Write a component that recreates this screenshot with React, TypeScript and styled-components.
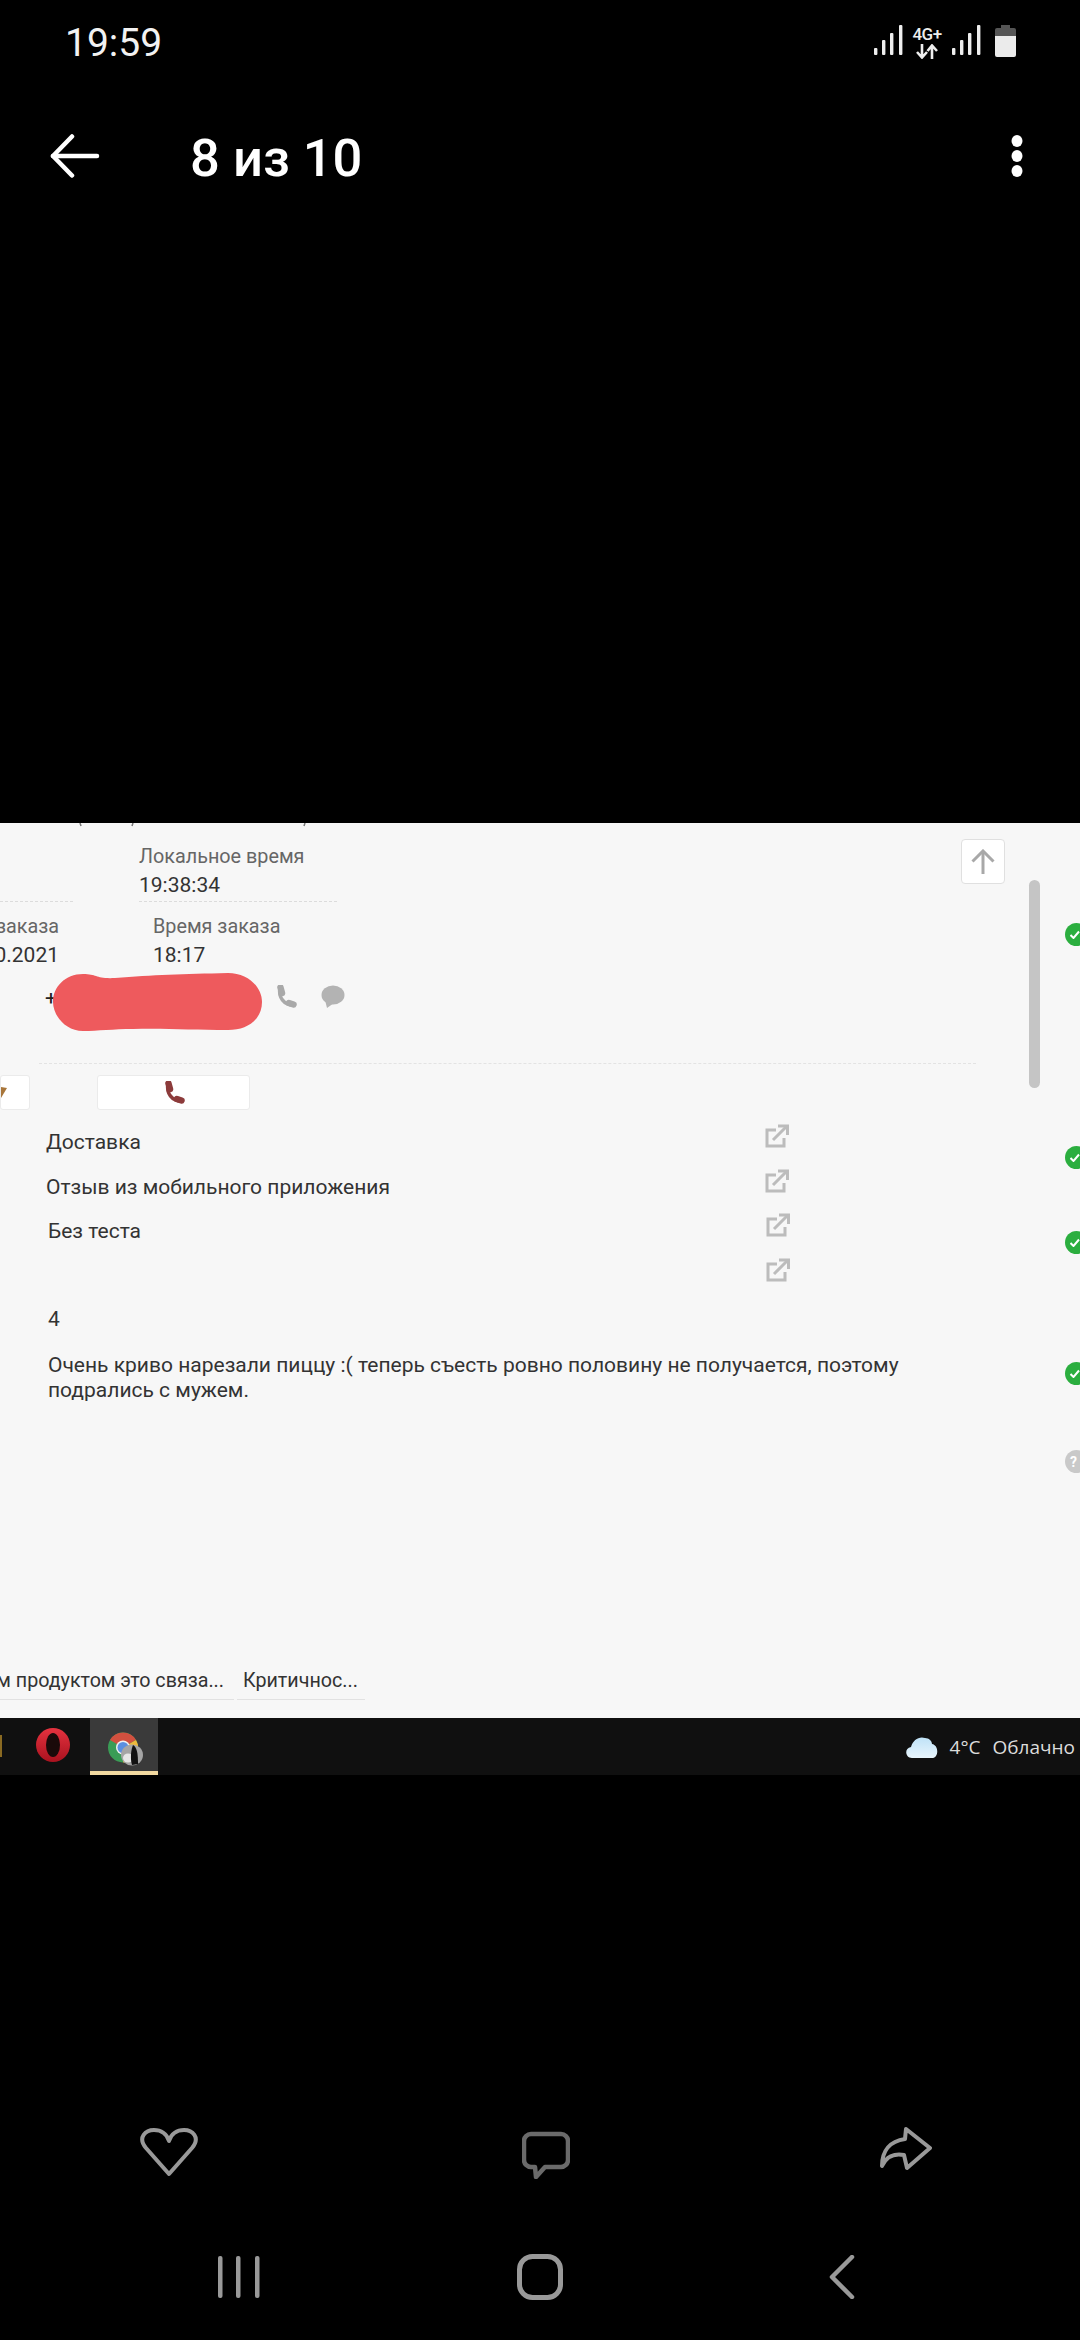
import React from "react";
import styled, { createGlobalStyle } from "styled-components";

const Global = createGlobalStyle`
  html, body { margin: 0; padding: 0; background: #000; }
  body { font-family: Roboto, "Liberation Sans", sans-serif; }
`;

const Page = styled.div`
  width: 1080px;
  height: 2340px;
  background: #000;
  display: flex;
  flex-direction: column;
  overflow: hidden;
`;

const Head = styled.header`
  height: 823px;
  flex: none;
  color: #fff;
`;

const StatusBar = styled.div`
  height: 70px;
  padding: 21px 64px 0 65px;
  box-sizing: border-box;
  display: flex;
  justify-content: space-between;
`;

const Clock = styled.div`
  font-size: 39px;
  line-height: 44px;
  color: #f2f2f2;
`;

const StatusIcons = styled.div`
  display: flex;
  align-items: flex-start;
  padding-top: 4px;
`;

const Net = styled.div`
  width: 32px;
  margin: 2px 9px 0 8px;
  display: flex;
  flex-direction: column;
  align-items: center;
  gap: 2px;
`;

const NetLabel = styled.span`
  font-size: 17px;
  line-height: 15px;
  font-weight: 500;
  letter-spacing: -0.5px;
  color: #eee;
  white-space: nowrap;
`;

const Battery = styled.svg`
  margin-left: 14px;
`;

const AppBar = styled.div`
  height: 74px;
  margin-top: 51px;
  padding: 0 57px 0 50px;
  display: flex;
  align-items: center;
`;

const BackArrow = styled.svg`
  margin-top: -4px;
`;

const MenuDots = styled.svg`
  margin-top: -5px;
`;

const Title = styled.h1`
  margin: 0 0 0 90px;
  flex: 1;
  font-size: 52.5px;
  line-height: 60px;
  font-weight: 500;
  color: #fff;
`;

const Photo = styled.section`
  height: 895px;
  flex: none;
  background: #f7f7f7;
  display: flex;
  overflow: hidden;
`;

const Content = styled.div`
  width: 1029px;
  flex: none;
  display: flex;
  flex-direction: column;
`;

const Ticks = styled.svg`
  display: block;
  flex: none;
`;

const TopRow = styled.div`
  display: flex;
  margin-top: 15px;
  height: 60px;
`;

const DottedStub = styled.div`
  width: 73px;
  margin-right: 66px;
  border-bottom: 1px dashed #dcdcdc;
`;

const LocalField = styled.div`
  width: 198px;
  border-bottom: 1px dashed #dcdcdc;
`;

const Label = styled.div`
  font-size: 19.8px;
  line-height: 29px;
  color: #666;
  white-space: nowrap;
`;

const Value = styled.div`
  font-size: 21px;
  line-height: 29px;
  color: #333;
  white-space: nowrap;
`;

const UpButton = styled.button`
  width: 44px;
  height: 45px;
  margin: -3px 24px 0 auto;
  padding: 0;
  box-sizing: border-box;
  background: #fff;
  border: 1px solid #e0e0e0;
  border-radius: 4px;
  display: flex;
  align-items: center;
  justify-content: center;
`;

const OrderRow = styled.div`
  display: grid;
  grid-template-columns: 59px 1fr;
  column-gap: 94px;
  margin-top: 10px;
`;

const ClippedField = styled.div`
  display: flex;
  flex-direction: column;
  align-items: flex-end;
  overflow: hidden;
`;

const PhoneRow = styled.div`
  display: flex;
  align-items: center;
  height: 57px;
  margin-top: 3px;
  padding-left: 45px;
`;

const Plus = styled.span`
  font-size: 21px;
  color: #222;
  width: 8px;
  margin-top: -8px;
`;

const Redaction = styled.svg`
  display: block;
  flex: none;
`;

const PhoneActions = styled.div`
  display: flex;
  align-items: flex-start;
  gap: 24px;
  margin: -10px 0 0 12px;
`;

const Divider = styled.div`
  margin: 33px 53px 0 39px;
  border-top: 1px dashed #e3e3e3;
`;

const ButtonRow = styled.div`
  display: flex;
  gap: 67px;
  margin-top: 11px;
`;

const ActionButton = styled.div<{ $w: number }>`
  width: ${(p) => p.$w}px;
  height: 35px;
  box-sizing: border-box;
  background: #fff;
  border: 1px solid #ebebeb;
  border-radius: 3px;
  display: flex;
  align-items: center;
  justify-content: ${(p) => (p.$w < 60 ? "flex-start" : "center")};
  flex: none;
`;

const FieldList = styled.div`
  margin-top: 9px;
  width: 795px;
`;

const FieldRow = styled.div<{ $pad: number }>`
  height: 44.7px;
  padding-left: ${(p) => p.$pad}px;
  display: flex;
  justify-content: space-between;
  align-items: flex-start;
  font-size: 21px;
  line-height: 46px;
  color: #333;
`;

const FieldIcon = styled.svg<{ $shift: number }>`
  margin: 5px ${(p) => 6 - p.$shift}px 0 0;
  flex: none;
`;

const Rating = styled.div`
  margin: 1px 0 0 48px;
  font-size: 21px;
  line-height: 40px;
  color: #333;
`;

const Comment = styled.p`
  margin: 14px 0 0 48px;
  width: 860px;
  font-size: 21px;
  line-height: 25.5px;
  color: #333;
`;

const BottomCells = styled.div`
  margin-top: auto;
  display: flex;
  gap: 3px;
  margin-bottom: 18px;
`;

const Cell = styled.div<{ $w: number; $pad: number }>`
  width: ${(p) => p.$w}px;
  box-sizing: border-box;
  padding-left: ${(p) => p.$pad}px;
  border-bottom: 1px solid #e2e2e2;
  font-size: 19.7px;
  line-height: 35px;
  height: 37px;
  color: #333;
  white-space: nowrap;
  display: flex;
  justify-content: ${(p) => (p.$pad ? "flex-start" : "flex-end")};
  overflow: hidden;
`;

const CellEnd = styled.span`
  padding-right: 10px;
`;

const Scrollbar = styled.div`
  width: 11px;
  height: 208px;
  margin-top: 57px;
  background: #c5c5c5;
  border-radius: 6px;
  flex: none;
`;

const Rail = styled.div`
  margin-left: 25px;
  flex: 1;
  overflow: hidden;
  display: flex;
  flex-direction: column;
`;

const StateDot = styled.div<{ $top: number; $grey?: boolean }>`
  width: 23px;
  height: 23px;
  flex: none;
  margin-top: ${(p) => p.$top}px;
  border-radius: 50%;
  background: ${(p) => (p.$grey ? "#c9c9c9" : "#2bae3f")};
  display: flex;
  align-items: center;
  padding-left: 5px;
  box-sizing: border-box;
  color: #fff;
  font-size: 14px;
  font-weight: 700;
`;

const Taskbar = styled.div`
  height: 57px;
  flex: none;
  background: #101010;
  display: flex;
  align-items: stretch;
`;

const PinnedSliver = styled.div`
  width: 2px;
  height: 22px;
  margin-top: 17px;
  background: #8a6a22;
  flex: none;
`;

const OperaSlot = styled.div`
  width: 88px;
  display: flex;
  align-items: center;
  justify-content: center;
  padding-left: 14px;
  padding-bottom: 3px;
  box-sizing: border-box;
  flex: none;
`;

const ActiveTile = styled.div`
  width: 68px;
  background: #3a3a3a;
  border-bottom: 4px solid #f2d9a0;
  box-sizing: border-box;
  display: flex;
  align-items: center;
  justify-content: center;
  flex: none;
`;

const Weather = styled.div`
  margin-left: auto;
  padding-right: 5px;
  display: flex;
  align-items: center;
  gap: 12px;
  font-family: "Open Sans", sans-serif;
  font-size: 19px;
  color: #dcdcdc;
  white-space: nowrap;
`;

const WeatherText = styled.span`
  display: flex;
  gap: 12px;
`;

const Actions = styled.div`
  display: flex;
  margin-top: 352px;
  height: 52px;
  padding: 0 148px 0 140px;
  justify-content: space-between;
  align-items: flex-start;
`;

const CommentIcon = styled.svg`
  margin: 4px 0 0 14px;
`;

const NavBar = styled.div`
  display: flex;
  margin-top: 76px;
  padding: 0 225px 0 218px;
  justify-content: space-between;
  align-items: flex-start;
`;

const HomeIcon = styled.svg`
  margin: -1px 9px 0 0;
`;

const Phone = ({ color }: { color: string }) => (
  <svg width="22" height="23" viewBox="0 0 22 23" fill="none">
    <path d="M5 3 C3 12 9 20 18 20" stroke={color} strokeWidth="3.5" />
    <path d="M5.5 2.5 L7 8" stroke={color} strokeWidth="6.5" strokeLinecap="round" />
    <path d="M14 18 L18.5 19.5" stroke={color} strokeWidth="6.5" strokeLinecap="round" />
  </svg>
);

const External = ({ shift }: { shift: number }) => (
  <FieldIcon $shift={shift} width="24" height="24" viewBox="0 0 24 24" fill="none" stroke="#bcbcbc" strokeWidth="3">
    <path d="M11 6 H2 V22 H19 V14" />
    <path d="M8 16 L21 3" />
    <path d="M13 2 H22.5 V11" />
  </FieldIcon>
);

const Signal = () => (
  <svg width="29" height="30" viewBox="0 0 29 30" fill="#eee">
    <rect x="0" y="23" width="3.4" height="7" rx="1" />
    <rect x="8" y="15" width="3.4" height="15" rx="1" />
    <rect x="16" y="8" width="3.4" height="22" rx="1" />
    <rect x="25" y="0" width="3.4" height="30" rx="1" />
  </svg>
);

const fields: [string, number, number][] = [
  ["Доставка", 46, 0],
  ["Отзыв из мобильного приложения", 46, 0],
  ["Без теста", 48, 1],
  ["", 48, 1],
];

export default function App() {
  return (
    <Page>
      <Global />
      <Head>
        <StatusBar>
          <Clock>19:59</Clock>
          <StatusIcons>
            <Signal />
            <Net>
              <NetLabel>4G+</NetLabel>
              <svg width="22" height="15" viewBox="0 0 22 15" fill="none" stroke="#eee" strokeWidth="2.6">
                <path d="M6 0 V13 M1 8 L6 13.5 L11 8" />
                <path d="M16 15 V2 M11.5 7 L16 1.5 L21 7" />
              </svg>
            </Net>
            <Signal />
            <Battery width="21" height="32" viewBox="0 0 21 32">
              <rect x="6" y="0" width="9" height="4" fill="#555" />
              <path d="M2 3 H19 A2 2 0 0 1 21 5 V11 H0 V5 A2 2 0 0 1 2 3 Z" fill="#555" />
              <path d="M0 11 H21 V30 A2 2 0 0 1 19 32 H2 A2 2 0 0 1 0 30 Z" fill="#ebebeb" />
            </Battery>
          </StatusIcons>
        </StatusBar>
        <AppBar>
          <BackArrow width="50" height="44" viewBox="0 0 50 44" fill="none" stroke="#fff" strokeWidth="4.5" strokeLinecap="round" strokeLinejoin="round">
            <path d="M47 22 H3" />
            <path d="M22 2.5 L3 22 L22 41.5" />
          </BackArrow>
          <Title>8 из 10</Title>
          <MenuDots width="12" height="42" viewBox="0 0 12 42" fill="#fff">
            <ellipse cx="6" cy="6" rx="5.5" ry="6" />
            <ellipse cx="6" cy="21" rx="5.5" ry="6" />
            <ellipse cx="6" cy="36" rx="5.5" ry="6" />
          </MenuDots>
        </AppBar>
      </Head>

      <Photo>
        <Content>
          <Ticks width="320" height="4" viewBox="0 0 320 4" stroke="#777" strokeWidth="1.5">
            <path d="M80 0 L81 3 M133 0 L132 3 M305 0 L304 3" />
          </Ticks>
          <TopRow>
            <DottedStub />
            <LocalField>
              <Label>Локальное время</Label>
              <Value>19:38:34</Value>
            </LocalField>
            <UpButton aria-label="Наверх">
              <svg width="24" height="26" viewBox="0 0 24 26" fill="none" stroke="#a8a8a8" strokeWidth="3">
                <path d="M12 25 V2" />
                <path d="M1.5 12.5 L12 2 L22.5 12.5" />
              </svg>
            </UpButton>
          </TopRow>
          <OrderRow>
            <ClippedField>
              <Label>Дата заказа</Label>
              <Value>12.10.2021</Value>
            </ClippedField>
            <div>
              <Label>Время заказа</Label>
              <Value>18:17</Value>
            </div>
          </OrderRow>
          <PhoneRow>
            <Plus>+</Plus>
            <Redaction width="210" height="58" viewBox="0 0 210 58">
              <path d="M30 1 C45 1 42 6 62 5 C100 2 130 1 175 0 C195 0 209 14 209 29 C209 46 195 57 175 57 C140 57 110 55 80 56 C60 56 45 58 30 58 C12 58 0 42 0 29 C0 14 12 1 30 1 Z" fill="#ee5a5d" />
            </Redaction>
            <PhoneActions>
              <Phone color="#a9a9a9" />
              <svg width="24" height="23" viewBox="0 0 24 23" fill="#b3b3b3">
                <ellipse cx="12" cy="10" rx="11.5" ry="9.5" />
                <path d="M4 15 L6 23 L13 18 Z" />
              </svg>
            </PhoneActions>
          </PhoneRow>
          <Divider />
          <ButtonRow>
            <ActionButton $w={30}>
              <svg width="6" height="14" viewBox="0 0 6 14">
                <path d="M0 1 L6 2 L0 12 Z" fill="#a8763a" />
              </svg>
            </ActionButton>
            <ActionButton $w={153}>
              <Phone color="#8c3b3b" />
            </ActionButton>
          </ButtonRow>
          <FieldList>
            {fields.map(([text, pad, shift], i) => (
              <FieldRow key={i} $pad={pad}>
                <span>{text}</span>
                <External shift={shift} />
              </FieldRow>
            ))}
          </FieldList>
          <Rating>4</Rating>
          <Comment>
            Очень криво нарезали пиццу :( теперь съесть ровно половину не получается, поэтому подрались с мужем.
          </Comment>
          <BottomCells>
            <Cell $w={234} $pad={0}>
              <CellEnd>м продуктом это связа...</CellEnd>
            </Cell>
            <Cell $w={128} $pad={6}>
              Критичнос...
            </Cell>
          </BottomCells>
        </Content>
        <Scrollbar />
        <Rail>
          {[
            { top: 100 },
            { top: 200 },
            { top: 62 },
            { top: 108 },
          ].map((d, i) => (
            <StateDot key={i} $top={d.top}>
              <svg width="10" height="9" viewBox="0 0 10 9" fill="none" stroke="#fff" strokeWidth="2">
                <path d="M0.5 5 L3.5 8 L9 1.5" />
              </svg>
            </StateDot>
          ))}
          <StateDot $top={65} $grey>?</StateDot>
        </Rail>
      </Photo>

      <Taskbar>
        <PinnedSliver />
        <OperaSlot>
          <svg width="34" height="34" viewBox="0 0 34 34">
            <defs>
              <linearGradient id="opera" x1="0" y1="0" x2="0" y2="1">
                <stop offset="0" stopColor="#e5323f" />
                <stop offset="1" stopColor="#a9121f" />
              </linearGradient>
            </defs>
            <circle cx="17" cy="17" r="17" fill="url(#opera)" />
            <ellipse cx="17" cy="17" rx="7" ry="12" fill="#1a0a0a" />
          </svg>
        </OperaSlot>
        <ActiveTile>
          <svg width="38" height="42" viewBox="0 0 38 42">
            <circle cx="18" cy="23.5" r="15" fill="#3a9c56" />
            <path d="M18 23.5 L5 16 A15 15 0 0 1 31 16 Z" fill="#d2503f" />
            <path d="M18 23.5 L31 16 A15 15 0 0 1 18 38.5 Z" fill="#eeb93c" />
            <circle cx="18" cy="23.5" r="7" fill="#f0f0f0" />
            <circle cx="18" cy="23.5" r="5.5" fill="#5a8fe0" />
            <ellipse cx="27" cy="31" rx="11" ry="10.5" fill="#a5a5a5" />
            <ellipse cx="23" cy="34" rx="5" ry="4.5" fill="#e6e6e6" />
            <path d="M28 21 C32 23 33 30 33 40 L27 41 C25 34 26 26 28 21 Z" fill="#111" />
          </svg>
        </ActiveTile>
        <Weather>
          <svg width="32" height="23" viewBox="0 0 32 23">
            <defs>
              <linearGradient id="cloud" x1="0" y1="0" x2="0" y2="1">
                <stop offset="0" stopColor="#bfe2f7" />
                <stop offset="1" stopColor="#e8f5fc" />
              </linearGradient>
            </defs>
            <path d="M6 23 C-1 23 -2 13 5 12 C7 5 13 1 19 3 C23 3 26 6 26 9 C33 10 33 23 26 23 Z" fill="url(#cloud)" />
          </svg>
          <WeatherText>
            <span>4°C</span>
            <span>Облачно</span>
          </WeatherText>
        </Weather>
      </Taskbar>

      <Actions>
        <svg width="58" height="50" viewBox="0 0 58 50" fill="none" stroke="#999" strokeWidth="4" strokeLinejoin="round">
          <path d="M29 47 L6 21 C-3 10 6 3 14 3 C21 3 27 7 29 14 C31 7 37 3 44 3 C52 3 61 10 52 21 Z" />
        </svg>
        <CommentIcon width="48" height="48" viewBox="0 0 48 48" fill="none" stroke="#6a6a6a" strokeWidth="4.5" strokeLinejoin="round">
          <path d="M9 3 H39 A7 7 0 0 1 46 10 V29 A7 7 0 0 1 39 36 H23 L14 46 L13 36 H9 A7 7 0 0 1 2 29 V10 A7 7 0 0 1 9 3 Z" />
        </CommentIcon>
        <svg width="52" height="44" viewBox="0 0 52 44" fill="none" stroke="#999" strokeWidth="4" strokeLinejoin="round">
          <path d="M26 2 L50 21 L27 41 L24 28 C14 26 6 30 2 39 C2 24 10 14 25 12 Z" />
        </svg>
      </Actions>
      <NavBar>
        <svg width="42" height="44" viewBox="0 0 42 44" fill="#999">
          <rect x="0" y="1" width="4.5" height="42" rx="2" />
          <rect x="18" y="1" width="4.5" height="42" rx="2" />
          <rect x="37" y="1" width="4.5" height="42" rx="2" />
        </svg>
        <HomeIcon width="46" height="46" viewBox="0 0 46 46" fill="none" stroke="#999" strokeWidth="5">
          <rect x="2.5" y="2.5" width="41" height="41" rx="13" />
        </HomeIcon>
        <svg width="26" height="44" viewBox="0 0 26 44" fill="none" stroke="#999" strokeWidth="4.5" strokeLinecap="round" strokeLinejoin="round">
          <path d="M23 2 L3 22 L23 42" />
        </svg>
      </NavBar>
    </Page>
  );
}
